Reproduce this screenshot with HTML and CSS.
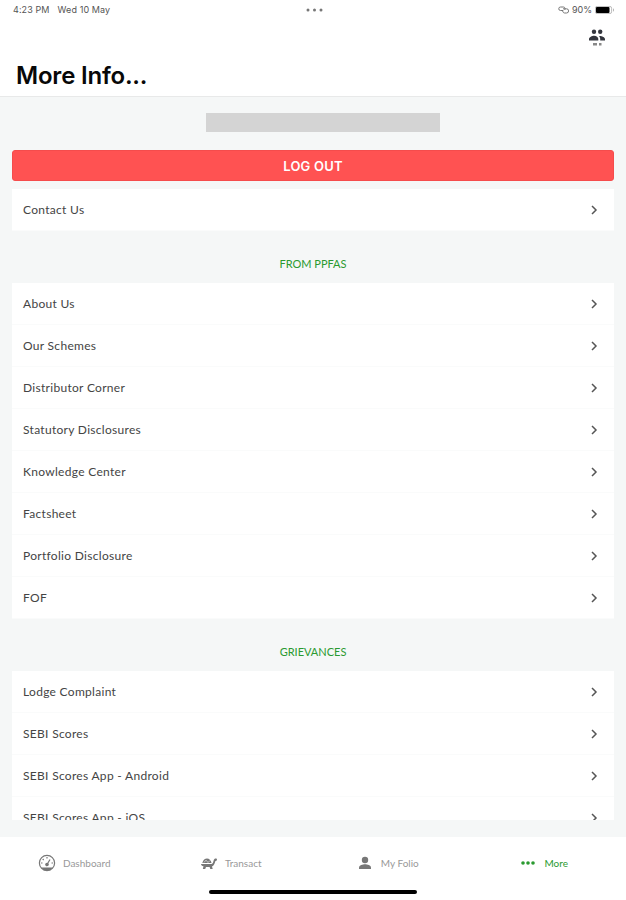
FILE: index.html
```
<!DOCTYPE html>
<html lang="en">
<head>
<meta charset="utf-8">
<title>More Info</title>
<link rel="stylesheet" href="styles.css">
</head>

<body>

<div class="statusbar">
  <div class="clock"><span>4:23 PM</span><span>Wed 10 May</span></div>
  <svg class="dots" width="17" height="4" viewBox="0 0 17 4"><circle cx="2" cy="2" r="1.5"/><circle cx="8.5" cy="2" r="1.5"/><circle cx="15" cy="2" r="1.5"/></svg>
  <div class="power">
    <!-- hotspot link -->
    <svg width="11" height="8" viewBox="0 0 11 8" fill="none" stroke="#777" stroke-width="1">
      <path d="M5 4.500H2.500a1.700 1.700 0 0 1 0-3.500H5.500a1.700 1.700 0 0 1 1 3M5 2.800h3.500a2 2 0 0 1 0 4.200H6.500a2 2 0 0 1-1.500-3"/>
    </svg>
    <span>90%</span>
    <svg width="20" height="8" viewBox="0 0 20 8">
      <rect x=".4" y=".4" width="16.2" height="7.2" rx="1.8" fill="none" stroke="#aaa" stroke-width=".8"/>
      <rect x="1" y="1" width="13.5" height="6" rx="1" fill="#000"/>
      <path d="M18 2.3a2 2 0 0 1 0 3.4z" fill="#aaa"/>
    </svg>
  </div>
</div>

<header class="header">
  <svg class="people" width="18" height="18" viewBox="0 0 18 18" fill="#33353d">
    <circle cx="6" cy="2.8" r="2.2"/>
    <circle cx="12.2" cy="2.8" r="2.2"/>
    <path d="M1 11.5V10c0-2 3-3.300 5.200-3.300S10.300 8 10.300 10v1.500z"/>
    <path d="M11 6.900c2.800-.2 6 1.200 6 3.100v1.500h-4.800V10c0-1.300-.4-2.200-1.200-3.100z"/>
    <path d="M5 14h4v2.500H5zM11 14h2.500v2.500H11z" fill="#888"/>
  </svg>
  <h1>More Info...</h1>
</header>

<main class="content">
  <div class="account"></div>
  <button class="logout">LOG OUT</button>

  <ul class="list single">
    <li>Contact Us <svg class="chevron" viewBox="0 0 8 10"><path d="M2 1l4 4-4 4"/></svg></li>
  </ul>

  <h2>FROM PPFAS</h2>
  <ul class="list">
    <li>About Us <svg class="chevron" viewBox="0 0 8 10"><path d="M2 1l4 4-4 4"/></svg></li>
    <li>Our Schemes <svg class="chevron" viewBox="0 0 8 10"><path d="M2 1l4 4-4 4"/></svg></li>
    <li>Distributor Corner <svg class="chevron" viewBox="0 0 8 10"><path d="M2 1l4 4-4 4"/></svg></li>
    <li>Statutory Disclosures <svg class="chevron" viewBox="0 0 8 10"><path d="M2 1l4 4-4 4"/></svg></li>
    <li>Knowledge Center <svg class="chevron" viewBox="0 0 8 10"><path d="M2 1l4 4-4 4"/></svg></li>
    <li>Factsheet <svg class="chevron" viewBox="0 0 8 10"><path d="M2 1l4 4-4 4"/></svg></li>
    <li>Portfolio Disclosure <svg class="chevron" viewBox="0 0 8 10"><path d="M2 1l4 4-4 4"/></svg></li>
    <li>FOF <svg class="chevron" viewBox="0 0 8 10"><path d="M2 1l4 4-4 4"/></svg></li>
  </ul>

  <h2>GRIEVANCES</h2>
  <ul class="list">
    <li>Lodge Complaint <svg class="chevron" viewBox="0 0 8 10"><path d="M2 1l4 4-4 4"/></svg></li>
    <li>SEBI Scores <svg class="chevron" viewBox="0 0 8 10"><path d="M2 1l4 4-4 4"/></svg></li>
    <li>SEBI Scores App - Android <svg class="chevron" viewBox="0 0 8 10"><path d="M2 1l4 4-4 4"/></svg></li>
    <li>SEBI Scores App - iOS <svg class="chevron" viewBox="0 0 8 10"><path d="M2 1l4 4-4 4"/></svg></li>
  </ul>
</main>

<footer class="footer">
  <nav class="tabs">
    <a class="tab">
      <svg width="18" height="18" viewBox="0 0 18 18" fill="none" stroke="#777" stroke-width="1.2">
        <circle cx="9" cy="9" r="7.600"/>
        <path d="M4.500 14h9L12 16H6z" fill="#777"/>
        <path d="M9 10.500l3-5M9 3v1.500M4.700 5l1 1M3 9h1.500M13.500 9H15"/>
        <circle cx="9" cy="10.500" r="1.200" fill="#777"/>
      </svg>
      <span>Dashboard</span>
    </a>
    <a class="tab">
      <!-- tortoise -->
      <svg width="18" height="18" viewBox="0 0 18 18" fill="#777">
        <path d="M2.300 9C3 5.800 5 4.500 7 4.500c2.300 0 3.800 1.500 4.500 4.500z"/>
        <path d="M1 10h10.500c1.600-.3 1.600-2 2.200-3.800.5-1.500 1.400-2 2.500-1.700.9.3 1 1.300.5 1.900l-1.400.9c-.6 2.500-1.500 4.600-3.300 5.200l.7 2.500h-2.400L9.600 13H6l-.8 2H2.800l.7-2.800C2 12 1 11.200 1 10z"/>
        <path d="M4 8.500l2-2.300 2 2.300 2-2" fill="none" stroke="#fff" stroke-width=".6"/>
      </svg>
      <span>Transact</span>
    </a>
    <a class="tab">
      <svg width="18" height="18" viewBox="0 0 18 18" fill="#777">
        <circle cx="9" cy="6" r="3.200"/>
        <path d="M3 15v-1.600c0-2 3.800-3.100 6-3.100s6 1.100 6 3.100V15z"/>
      </svg>
      <span>My Folio</span>
    </a>
    <a class="tab active">
      <svg width="18" height="18" viewBox="0 0 18 18" fill="#2a9a30">
        <circle cx="4" cy="9" r="1.800"/><circle cx="9" cy="9" r="1.800"/><circle cx="14" cy="9" r="1.800"/>
      </svg>
      <span>More</span>
    </a>
  </nav>
  <div class="homebar"></div>
</footer>

</body>
</html>
```
FILE: styles.css
```
* {
  box-sizing: border-box;
}

body {
  margin: 0;
  height: 900px;
  display: flex;
  flex-direction: column;
  overflow: hidden;
  background-color: #f5f7f7;
  font-family: Lato, "Liberation Sans", sans-serif;
  color: #444;
}

.statusbar {
  height: 19px;
  padding: 0 11px 0 13px;
  display: grid;
  grid-template-columns: 1fr auto 1fr;
  align-items: center;
  background: #fff;
  font-family: Inter, "Liberation Sans", sans-serif;
  font-size: 9px;
  color: #555;
}

.clock, .power {
  display: flex;
  align-items: center;
}

.clock {
  gap: 8px;
  letter-spacing: .1px;
}

.power {
  gap: 3px;
  justify-content: flex-end;
}

.dots {
  fill: #777;
}

.header {
  height: 78px;
  padding: 10px 20px 0 16px;
  background: #fff;
  border-bottom: 1px solid #e8e9e9;
}

.people {
  display: block;
  margin-left: auto;
}

h1 {
  margin: 14px 0 0;
  font: 600 24px/30px Inter, "Liberation Sans", sans-serif;
  letter-spacing: -.2px;
  color: #080808;
}

.content {
  height: 723px;
  padding: 16px 12px 0;
  overflow: hidden;
}

.account {
  width: 234px;
  height: 19px;
  margin: 0 auto 18px 194px;
  background: #d4d4d4;
}

.logout {
  display: block;
  width: 100%;
  height: 31px;
  padding: 0;
  border: 1px solid #f54c4c;
  border-radius: 3px;
  background: #ff5252;
  color: #fff;
  font: 600 13px Inter, "Liberation Sans", sans-serif;
  letter-spacing: .2px;
}

.list {
  margin: 0;
  padding: 0;
  list-style: none;
  background: #fff;
}

.list li {
  height: 42px;
  padding: 0 16px 0 11px;
  display: flex;
  align-items: center;
  justify-content: space-between;
  border-bottom: 1px solid #fafbfb;
  font-size: 12px;
  letter-spacing: .3px;
}

.list.single {
  margin-top: 8px;
}

.chevron {
  width: 8px;
  height: 10px;
  fill: none;
  stroke: #555;
  stroke-width: 1.5;
}

h2 {
  margin: 0;
  height: 52px;
  text-align: center;
  font-size: 11px;
  font-weight: 400;
  line-height: 65px;
  color: #2a9a30;
}

.footer {
  height: 63px;
  margin-top: 17px;
  background: #fff;
}

.tabs {
  height: 53px;
  padding-bottom: 2px;
  margin: 0 4px 0 -4px;
  display: grid;
  grid-template-columns: repeat(4, 1fr);
}

.tab {
  display: flex;
  align-items: center;
  justify-content: center;
  gap: 7px;
  font-size: 10px;
  color: #999;
}

.tab.active {
  color: #2a9a30;
}

.homebar {
  width: 208px;
  height: 4px;
  margin: 0 auto;
  border-radius: 2px;
  background: #000;
}
```
